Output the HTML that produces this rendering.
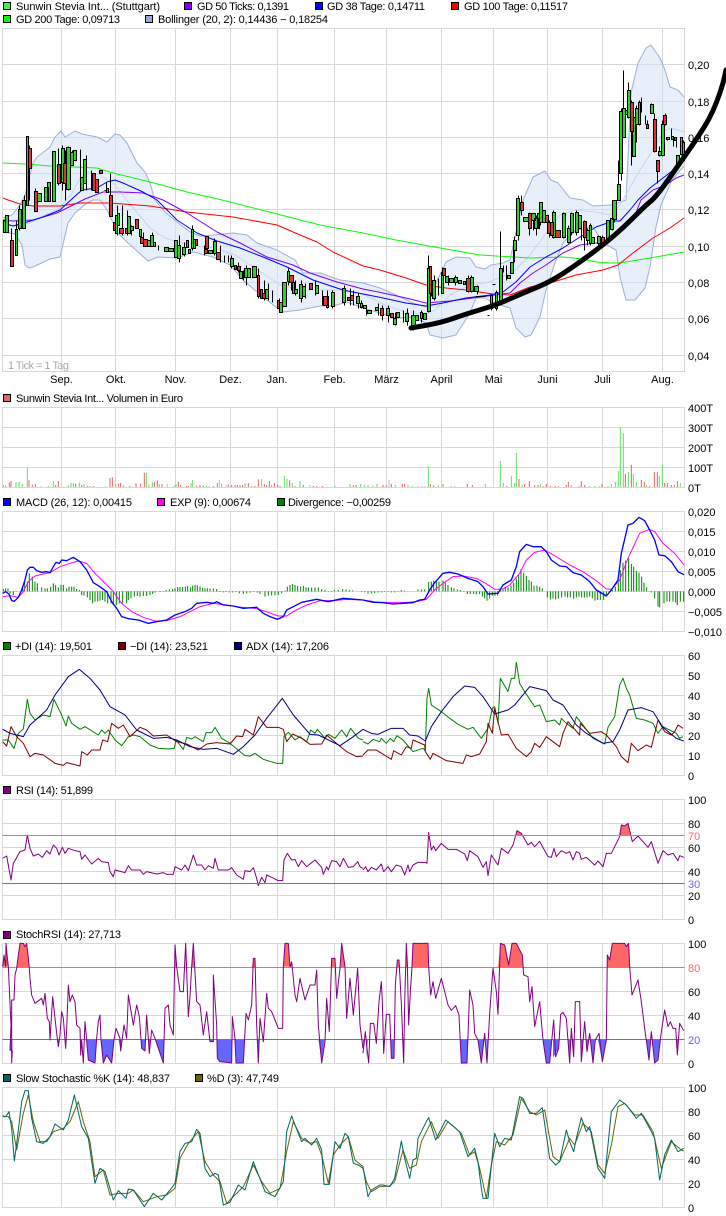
<!DOCTYPE html>
<html lang="de"><head><meta charset="utf-8"><title>Chart</title>
<style>
html,body{margin:0;padding:0;background:#fff}
svg{display:block}
text{font-family:"Liberation Sans",sans-serif;font-size:11px;fill:#000}
.l{fill:none;stroke-linejoin:round}
</style></head><body>
<svg xmlns="http://www.w3.org/2000/svg" width="726" height="1216" viewBox="0 0 726 1216">
<defs>
<clipPath id="ca"><rect x="3" y="943" width="682" height="24"/></clipPath>
<clipPath id="cb"><rect x="3" y="1039" width="682" height="25"/></clipPath>
</defs>
<rect width="726" height="1216" fill="#fff"/>

<!-- GRID -->
<g fill="none" stroke="#d8d8d8" shape-rendering="crispEdges">
<path d="M2.5 28.5H684.5V371.5H2.5ZM2.5 64.5H684.5M2.5 101.5H684.5M2.5 137.5H684.5M2.5 173.5H684.5M2.5 209.5H684.5M2.5 246.5H684.5M2.5 282.5H684.5M2.5 318.5H684.5M2.5 355.5H684.5M61.5 28V371M115.5 28V371M175.5 28V371M230.5 28V371M277.5 28V371M334.5 28V371M386.5 28V371M441.5 28V371M493.5 28V371M547.5 28V371M602.5 28V371M662.5 28V371"/>
<path d="M2.5 407.5H684.5V487.5H2.5ZM2.5 427.5H684.5M2.5 447.5H684.5M2.5 467.5H684.5M61.5 407V487M115.5 407V487M175.5 407V487M230.5 407V487M277.5 407V487M334.5 407V487M386.5 407V487M441.5 407V487M493.5 407V487M547.5 407V487M602.5 407V487M662.5 407V487"/>
<path d="M2.5 511.5H684.5V631.5H2.5ZM2.5 531.5H684.5M2.5 551.5H684.5M2.5 571.5H684.5M2.5 591.5H684.5M2.5 611.5H684.5M61.5 511V631M115.5 511V631M175.5 511V631M230.5 511V631M277.5 511V631M334.5 511V631M386.5 511V631M441.5 511V631M493.5 511V631M547.5 511V631M602.5 511V631M662.5 511V631"/>
<path d="M2.5 655.5H684.5V775.5H2.5ZM2.5 675.5H684.5M2.5 695.5H684.5M2.5 715.5H684.5M2.5 735.5H684.5M2.5 755.5H684.5M61.5 655V775M115.5 655V775M175.5 655V775M230.5 655V775M277.5 655V775M334.5 655V775M386.5 655V775M441.5 655V775M493.5 655V775M547.5 655V775M602.5 655V775M662.5 655V775"/>
<path d="M2.5 799.5H684.5V919.5H2.5ZM2.5 823.5H684.5M2.5 847.5H684.5M2.5 871.5H684.5M2.5 895.5H684.5M61.5 799V919M115.5 799V919M175.5 799V919M230.5 799V919M277.5 799V919M334.5 799V919M386.5 799V919M441.5 799V919M493.5 799V919M547.5 799V919M602.5 799V919M662.5 799V919"/>
<path d="M2.5 943.5H684.5V1063.5H2.5ZM2.5 991.5H684.5M2.5 1015.5H684.5M61.5 943V1063M115.5 943V1063M175.5 943V1063M230.5 943V1063M277.5 943V1063M334.5 943V1063M386.5 943V1063M441.5 943V1063M493.5 943V1063M547.5 943V1063M602.5 943V1063M662.5 943V1063"/>
<path d="M2.5 1087.5H684.5V1207.5H2.5ZM2.5 1111.5H684.5M2.5 1135.5H684.5M2.5 1159.5H684.5M2.5 1183.5H684.5M61.5 1087V1207M115.5 1087V1207M175.5 1087V1207M230.5 1087V1207M277.5 1087V1207M334.5 1087V1207M386.5 1087V1207M441.5 1087V1207M493.5 1087V1207M547.5 1087V1207M602.5 1087V1207M662.5 1087V1207"/>
</g>

<!-- BOLLINGER -->
<path fill="#d4e2f7" fill-opacity=".55" stroke="none" d="M3 218L12 215 20 205 25 195 33 163 37 157 50 147 55 137 61 131 65 137 75 131 82 134 97 137 107 142 115 134 120 135 127 143 137 163 145 172 150 183 155 200 165 212 177 222 190 232 200 236 213 235 233 233 247 235 257 243 277 250 295 260 303 273 320 273 340 280 363 283 380 288 396 295 413 303 426 307 436 283 446 262 456 257 470 258 476 267 485 269 491 265 503 263 510 260 523 200 533 177 545 171 551 180 558 183 570 198 583 200 593 206 611 205 626 200 631 93 638 63 646 48 651 45 660 58 665 70 670 87 678 90 684 97V166L672 180 661 205 656 227 650 267 645 288 635 300 626 300 620 277 616 250 603 243 593 227 576 230 563 243 555 263 546 290 540 317 531 335 525 337 516 328 510 308 493 303 485 298 476 298 470 313 456 335 443 338 430 335 426 323 413 317 396 318 380 313 363 308 347 302 333 306 320 306 300 310 283 312 277 308 257 292 243 280 230 265 213 257 193 252 177 258 158 257 148 261 128 243 118 233 107 210 100 200 93 200 87 203 75 213 68 223 60 257 50 259 33 267 29 268 25 265 22 245 15 234 3 232Z"/>
<path class="l" stroke="#9db0d8" d="M3 218L12 215 20 205 25 195 33 163 37 157 50 147 55 137 61 131 65 137 75 131 82 134 97 137 107 142 115 134 120 135 127 143 137 163 145 172 150 183 155 200 165 212 177 222 190 232 200 236 213 235 233 233 247 235 257 243 277 250 295 260 303 273 320 273 340 280 363 283 380 288 396 295 413 303 426 307 436 283 446 262 456 257 470 258 476 267 485 269 491 265 503 263 510 260 523 200 533 177 545 171 551 180 558 183 570 198 583 200 593 206 611 205 626 200 631 93 638 63 646 48 651 45 660 58 665 70 670 87 678 90 684 97"/>
<path class="l" stroke="#9db0d8" d="M3 232L15 234 22 245 25 265 29 268 33 267 50 259 60 257 68 223 75 213 87 203 93 200 100 200 107 210 118 233 128 243 148 261 158 257 177 258 193 252 213 257 230 265 243 280 257 292 277 308 283 312 300 310 320 306 333 306 347 302 363 308 380 313 396 318 413 317 426 323 430 335 443 338 456 335 470 313 476 298 485 298 493 303 510 308 516 328 525 337 531 335 540 317 546 290 555 263 563 243 576 230 593 227 603 243 616 250 620 277 626 300 635 300 645 288 650 267 656 227 661 205 672 180 684 166"/>
<path class="l" stroke="#c5d6f0" d="M3 225L15 226 30 223 45 215 60 208 72 193 80 178 88 172 100 175 115 185 125 198 135 210 150 228 165 238 180 243 195 246 215 248 235 255 250 265 270 278 280 285 300 290 320 290 345 290 365 295 385 305 405 312 425 315 435 310 450 295 470 285 485 283 500 278 515 270 530 255 545 235 560 215 575 210 595 212 610 215 620 205 640 170 653 150 663 132 670 128 678 130 684 132"/>

<!-- MOVING AVERAGES -->
<path class="l" stroke="#00ff00" d="M3 163L25 164 50 166 97 168 113 173 150 182 187 192 222 200 277 214 320 225 363 233 396 240 440 248 480 255 530 258 563 257 583 259 596 262 610 263 620 263 650 258 684 252"/>
<path class="l" stroke="#ff0000" d="M3 198L8 200 20 204 33 206 60 206 80 203 110 203 150 206 187 212 233 217 277 225 300 235 317 242 333 252 363 266 380 270 406 278 426 285 446 288 466 290 493 294 510 295 530 287 550 283 576 275 603 270 618 265 633 253 653 238 670 228 684 218"/>
<path class="l" stroke="#7f00ff" d="M3 220L13 221 33 220 57 213 73 205 85 199 103 192 120 192 143 193 163 200 187 213 217 232 240 243 267 257 293 265 310 273 337 282 363 289 383 293 406 298 426 303 450 301 473 298 510 293 520 283 533 273 546 265 563 253 580 245 596 243 610 240 623 230 633 220 641 200 653 190 666 185 676 178 684 175"/>
<path class="l" stroke="#0000ff" d="M3 223L13 226 27 222 43 217 60 210 73 198 82 190 97 188 107 182 115 180 123 183 143 192 157 200 177 220 197 233 217 241 240 248 263 257 287 267 313 280 343 290 363 294 383 298 406 303 426 306 443 303 466 298 490 295 503 292 516 282 530 267 546 257 563 248 580 237 596 227 613 221 620 221 630 210 638 200 650 188 663 178 676 168 684 161"/>

<!-- CANDLES -->
<g transform="translate(.5 .5)" shape-rendering="crispEdges">
<path fill="none" stroke="#000" d="M11 228V266M16 220V255M19 205V230M24 195V228M27 136V205M29 145V200M35 188V205M58 148V185M62 145V190M65 150V200M68 146V190M72 150V165M80 149V178M86 155V190M91 170V190M106 182V192M110 173V205M117 205V235M122 205V235M127 210V235M131 225V235M143 232V245M152 232V246M158 245V250M177 240V257M179 235V262M184 242V256M192 225V250M204 245V255M214 238V255M220 245V262M224 255V262M228 255V262M231 255V268M238 262V272M243 270V280M246 265V285M258 268V298M264 280V300M268 283V300M272 290V302M279 298V312M288 268V285M291 275V290M295 280V295M301 280V302M305 283V298M315 280V295M322 290V305M327 290V308M332 290V308M344 285V305M350 288V305M353 290V305M358 292V308M361 300V308M366 305V315M378 303V315M382 305V320M388 305V322M395 312V325M403 310V322M407 308V325M413 310V330M421 310V322M428 255V312M431 266V296M434 275V300M438 278V295M442 267V290M448 275V285M455 275V285M468 275V292M471 275V292M477 285V294M491 294V310M496 290V310M500 231V305M503 265V272M506 265V280M513 250V262M514 236V262M518 195V240M521 195V215M529 212V235M533 213V230M536 215V235M540 202V225M549 220V237M553 210V238M563 212V238M568 225V243M571 212V235M576 210V235M581 215V240M584 220V250M587 228V245M590 223V245M598 235V246M602 235V247M608 220V242M612 212V230M614 200V222M618 160V200M621 108V180M623 70V108M628 82V118M631 100V165M633 117V148M636 105V142M639 100V125M641 97V112M645 115V124M647 120V128M651 103V113M654 113V152M657 160V183M659 146V156M662 120V156M665 113V125M667 137V140M671 128V137M673 137V146M676 137V147M677 155V168M681 137V155M683 140V160M487 315H489M475 296H485M492 284H495M104 190H108"/>
<path fill="#33cc33" stroke="#000" d="M3 220h2v12h-2zM5 215h3v17h-3zM15 229h2v26h-2zM18 209h3v19h-3zM22 200h3v28h-3zM26 136h2v69h-2zM37 193h4v8h-4zM44 187h4v14h-4zM47 182h3v19h-3zM52 151h3v50h-3zM61 148h3v34h-3zM66 147h4v42h-4zM70 152h3v13h-3zM73 150h3v10h-3zM80 177h3v13h-3zM83 159h3v24h-3zM106 188h2v4h-2zM115 215h2v18h-2zM117 213h2v12h-2zM127 216h3v17h-3zM130 226h3v4h-3zM139 229h2v7h-2zM147 240h3v6h-3zM150 235h3v11h-3zM153 242h2v4h-2zM164 247h4v4h-4zM168 248h5v3h-5zM174 240h3v17h-3zM177 245h3v13h-3zM182 247h3v7h-3zM186 240h2v7h-2zM188 249h2v4h-2zM191 229h2v19h-2zM193 239h2v9h-2zM208 250h4v3h-4zM213 241h3v12h-3zM230 258h3v8h-3zM239 271h3v7h-3zM244 268h3v9h-3zM247 268h3v9h-3zM252 266h4v11h-4zM265 289h3v9h-3zM279 302h3v10h-3zM282 282h4v24h-4zM287 271h2v10h-2zM292 282h2v11h-2zM294 289h3v4h-3zM299 284h3v14h-3zM302 286h3v10h-3zM315 285h3v8h-3zM326 296h2v11h-2zM331 292h3v14h-3zM342 288h3v14h-3zM356 296h3v7h-3zM360 303h2v4h-2zM363 305h3v3h-3zM367 310h4v3h-4zM375 307h3v3h-3zM386 308h3v7h-3zM393 318h3v6h-3zM396 312h3v5h-3zM405 313h3v8h-3zM411 315h4v11h-4zM415 315h3v5h-3zM420 312h2v6h-2zM423 313h3v6h-3zM427 268h3v43h-3zM432 280h3v18h-3zM441 272h2v21h-2zM445 276h3v6h-3zM449 278h4v4h-4zM454 277h3v5h-3zM458 280h3v3h-3zM463 281h2v3h-2zM470 277h3v14h-3zM474 286h4v5h-4zM490 295h2v13h-2zM495 292h2v16h-2zM499 268h3v35h-3zM507 275h3v3h-3zM510 262h3v11h-3zM513 240h3v10h-3zM516 198h3v37h-3zM523 217h5v4h-5zM531 213h4v7h-4zM534 218h4v10h-4zM537 213h2v15h-2zM539 202h3v20h-3zM542 210h3v12h-3zM552 212h3v25h-3zM562 213h3v24h-3zM567 228h3v14h-3zM570 213h3v19h-3zM575 212h3v20h-3zM578 215h3v13h-3zM586 230h3v10h-3zM589 225h2v18h-2zM591 237h3v6h-3zM597 236h3v7h-3zM606 220h3v19h-3zM610 218h3v11h-3zM612 200h4v19h-4zM617 184h3v16h-3zM619 111h3v62h-3zM622 108h3v29h-3zM625 110h2v4h-2zM627 90h3v27h-3zM632 117h3v39h-3zM635 108h3v16h-3zM638 102h2v22h-2zM650 104h3v9h-3zM658 151h3v4h-3zM661 124h3v31h-3zM666 137h3v2h-3zM671 136h2v3h-2zM676 155h3v11h-3zM680 137h2v17h-2zM682 142h2v18h-2z"/>
<path fill="#dd3333" stroke="#000" d="M10 240h3v26h-3zM28 148h3v20h-3zM34 191h3v20h-3zM57 164h3v19h-3zM63 163h3v20h-3zM92 173h3v17h-3zM95 179h3v13h-3zM99 170h3v3h-3zM109 195h3v21h-3zM113 222h2v8h-2zM119 228h4v5h-4zM125 228h2v5h-2zM135 219h3v9h-3zM140 237h3v6h-3zM143 239h4v7h-4zM195 239h2v6h-2zM204 249h3v4h-3zM205 236h3v12h-3zM216 252h4v7h-4zM234 265h2v4h-2zM237 266h3v4h-3zM257 275h2v21h-2zM260 289h2v9h-2zM262 293h3v5h-3zM277 300h2v8h-2zM289 275h4v7h-4zM309 283h3v6h-3zM323 296h4v9h-4zM347 297h3v3h-3zM350 295h3v5h-3zM380 308h3v7h-3zM390 313h3v4h-3zM429 266h2v27h-2zM442 268h3v7h-3zM466 278h4v13h-4zM520 202h3v8h-3zM528 213h3v15h-3zM545 215h3v7h-3zM547 222h3v11h-3zM550 222h3v13h-3zM555 230h5v7h-5zM583 221h3v16h-3zM601 237h3v8h-3zM630 102h3v29h-3zM646 124h2v4h-2zM653 119h3v32h-3zM656 160h3v11h-3zM663 115h3v9h-3zM674 137h2v3h-2z"/>
</g>

<!-- VOLUME (zoom coordinates, left) -->
<g transform="translate(0 390) scale(.33333)" fill="none" stroke-width="3">
<path stroke="#66dd66" d="M10 291V285M17 291V285M48 291V276M57 291V276M67 291V282M82 291V232M145 291V288M160 291V273M205 291V285M213 291V279M220 291V279M238 291V277M252 291V282M347 291V281M370 291V285M439 291V249M447 291V284M457 291V277M478 291V282M523 291V287M528 291V282M573 291V279M578 291V270M620 291V287M628 291V288M665 291V280M678 291V287M735 291V279M755 291V288M785 291V267M815 291V285M853 291V258M861 291V267M877 291V279M900 291V273M930 291V285M1005 291V288M1050 291V282M1082 291V282"/>
<path stroke="#dd6666" d="M28 291V278M33 291V273M87 291V270M97 291V284M106 291V282M167 291V285M175 291V273M227 291V281M245 291V285M263 291V288M270 291V288M280 291V288M330 291V264M337 291V262M355 291V281M362 291V279M390 291V288M408 291V280M422 291V281M433 291V249M463 291V276M472 291V271M486 291V282M535 291V276M542 291V285M560 291V288M565 291V288M590 291V287M600 291V285M610 291V287M640 291V288M652 291V279M685 291V283M695 291V285M705 291V285M712 291V285M720 291V285M728 291V285M745 291V279M765 291V288M775 291V268M793 291V282M800 291V285M808 291V273M823 291V279M833 291V285M840 291V288M869 291V270M885 291V288M910 291V285M940 291V288M950 291V288M968 291V288M1060 291V285M1068 291V285"/>
<path stroke="#c0c0c0" d="M122 291V288M316 291V288M502 291V282M658 291V270M678 291V285"/>
</g>
<!-- VOLUME right -->
<g transform="translate(363 390) scale(.33333)" fill="none" stroke-width="3">
<path stroke="#66dd66" d="M5 291V285M15 291V285M42 291V282M97 291V285M135 291V285M148 291V288M196 291V228M226 291V286M367 291V282M412 291V213M421 291V279M445 291V258M455 291V279M460 291V189M478 291V285M532 291V282M625 291V285M680 291V288M695 291V288M708 291V288M735 291V288M745 291V282M757 291V276M766 291V243M772 291V111M781 291V129M796 291V246M811 291V252M820 291V276M850 291V285M860 291V288M889 291V258M898 291V225M952 291V279"/>
<path stroke="#dd6666" d="M60 291V285M70 291V286M85 291V282M118 291V282M125 291V282M202 291V282M212 291V286M240 291V282M313 291V282M328 291V285M432 291V288M468 291V267M485 291V282M499 291V273M515 291V285M525 291V285M540 291V288M550 291V282M562 291V288M577 291V288M586 291V288M610 291V285M616 291V276M648 291V288M655 291V273M665 291V285M717 291V282M787 291V252M805 291V225M835 291V270M844 291V276M874 291V246M883 291V246M905 291V279M913 291V279M925 291V285M934 291V285M943 291V273"/>
<path stroke="#c0c0c0" d="M30 291V286M78 291V270M165 291V288M178 291V288M186 291V288M265 291V288M275 291V288"/>
</g>

<!-- MACD left -->
<g transform="translate(0 390) scale(.33333)" fill="none" stroke-linejoin="round">
<path stroke="#008000" stroke-width="3" d="M10 604V597M17 604V595M24 604V595M30 604V610M40 604V615M48 604V605M68 604V590M74 604V575M82 604V575M88 604V550M97 604V560M105 604V575M112 604V580M125 604V592M135 604V595M142 604V595M152 604V590M160 604V580M167 604V585M175 604V592M183 604V585M190 604V585M200 604V595M207 604V590M215 604V590M222 604V590M230 604V597M238 604V600M245 604V615M252 604V617M262 604V622M270 604V630M278 604V640M285 604V635M293 604V635M300 604V632M308 604V630M315 604V635M323 604V640M333 604V640M340 604V645M350 604V645M358 604V640M368 604V640M380 604V640M385 604V630M393 604V625M403 604V620M412 604V618M420 604V620M430 604V618M440 604V618M450 604V615M458 604V612M465 604V608M480 604V606M490 604V603M498 604V600M508 604V598M518 604V597M525 604V595M533 604V591M540 604V591M548 604V591M556 604V590M563 604V588M572 604V592M578 604V587M585 604V585M592 604V586M600 604V590M608 604V594M615 604V595M622 604V595M630 604V596M640 604V596M650 604V597M660 604V606M670 604V607M678 604V606M688 604V607M698 604V607M708 604V606M718 604V610M730 604V612M740 604V610M750 604V608M760 604V606M772 604V608M780 604V612M795 604V620M805 604V617M815 604V616M825 604V616M835 604V615M845 604V610M855 604V602M862 604V590M870 604V585M878 604V582M885 604V585M893 604V588M902 604V590M910 604V588M918 604V592M925 604V593M935 604V593M945 604V592M955 604V592M965 604V597M975 604V600M985 604V603M995 604V606M1003 604V600M1015 604V600M1028 604V597M1038 604V598M1048 604V600M1058 604V601M1070 604V604M1085 604V606"/>
<path stroke="#ff00ff" stroke-width="3" d="M8 620L30 617 55 622 70 605 85 575 105 558 130 552 150 548 180 530 210 520 235 513 260 520 285 550 310 575 340 605 365 640 395 665 430 682 465 693 500 692 540 680 570 665 600 650 640 640 680 645 725 652 765 655 800 665 835 678 860 678 885 662 920 645 960 632 1000 632 1040 628 1089 630"/>
<path stroke="#0000ff" stroke-width="4" d="M8 610L17 605 27 612 35 632 43 634 55 622 65 600 75 570 82 540 90 532 100 532 110 542 125 547 140 545 150 548 160 530 168 517 178 520 185 510 200 512 220 502 240 515 260 540 280 578 300 590 320 605 335 635 350 655 365 680 385 686 415 690 445 700 470 695 500 690 525 675 555 665 575 655 590 640 620 637 640 640 650 635 670 645 700 648 730 655 770 652 790 670 810 680 832 688 850 680 860 660 880 650 905 637 950 628 985 635 1030 625 1089 630"/>
</g>
<!-- MACD right -->
<g transform="translate(363 390) scale(.33333)" fill="none" stroke-linejoin="round">
<path stroke="#008000" stroke-width="3" d="M5 604V607M15 604V611M25 604V611M35 604V609M45 604V608M55 604V607M65 604V606M75 604V606M85 604V607M95 604V607M105 604V603M115 604V600M125 604V602M135 604V605M145 604V604M155 604V604M165 604V598M175 604V598M185 604V598M197 604V576M205 604V575M212 604V572M220 604V573M228 604V575M240 604V572M247 604V578M255 604V585M265 604V592M273 604V595M283 604V598M292 604V600M302 604V603M313 604V612M322 604V612M332 604V612M340 604V613M350 604V612M358 604V620M365 604V625M372 604V632M380 604V625M388 604V617M396 604V617M404 604V617M413 604V600M420 604V598M427 604V590M435 604V592M444 604V587M452 604V578M460 604V565M467 604V555M474 604V537M482 604V548M490 604V558M498 604V570M505 604V575M513 604V587M522 604V587M530 604V590M538 604V595M553 604V622M562 604V628M570 604V625M578 604V628M586 604V626M596 604V622M606 604V620M614 604V622M622 604V622M632 604V626M640 604V622M648 604V620M656 604V622M664 604V623M672 604V622M680 604V620M688 604V625M696 604V632M704 604V630M712 604V630M722 604V630M730 604V615M738 604V606M748 604V600M757 604V590M766 604V578M772 604V540M780 604V518M788 604V512M797 604V505M805 604V522M812 604V530M820 604V543M828 604V548M836 604V560M843 604V578M851 604V592M860 604V605M865 604V607M875 604V625M885 604V650M890 604V652M903 604V640M912 604V635M920 604V635M930 604V635M938 604V638M943 604V645M952 604V635M962 604V635"/>
<path stroke="#ff00ff" stroke-width="3" d="M0 630L40 636 80 638 120 638 160 635 190 628 215 600 240 580 270 560 300 558 340 565 365 578 395 598 420 597 440 585 470 550 490 510 515 487 545 480 580 500 620 525 660 545 700 572 730 597 745 598 770 570 795 505 830 430 860 418 875 425 900 460 935 490 963 525"/>
<path stroke="#0000ff" stroke-width="4" d="M0 630L30 637 60 638 90 642 120 640 150 638 170 630 185 628 200 600 215 578 240 550 260 547 285 552 315 565 345 575 360 590 375 612 405 610 420 585 445 570 460 530 470 485 490 463 510 470 535 470 550 485 565 510 590 528 610 530 630 548 655 555 680 575 700 600 730 618 745 600 765 570 775 490 795 405 810 400 828 382 845 392 860 420 875 450 888 495 905 497 925 515 945 545 963 554"/>
</g>

<!-- DI + RSI left -->
<g transform="translate(0 640) scale(.33333)" fill="none" stroke-width="3" stroke-linejoin="round">
<path stroke="#008000" d="M8 300L25 300 42 325 55 280 70 267 82 178 90 220 105 240 130 225 150 230 162 178 185 225 198 258 205 228 215 250 240 268 255 260 295 285 305 270 315 280 325 270 345 300 365 317 385 290 400 285 420 290 450 315 475 325 505 327 523 325 528 300 550 328 560 292 575 297 585 290 610 305 618 278 635 278 645 262 665 295 690 310 735 347 750 348 765 340 790 358 830 370 848 370 852 290 865 277 885 300 900 290 920 305 932 270 945 280 952 268 975 295 985 283 1005 295 1025 270 1040 290 1052 265 1075 295 1089 300"/>
<path stroke="#800000" d="M8 305L20 318 33 260 50 290 70 310 90 350 105 340 130 345 165 370 190 376 200 368 240 378 245 335 262 345 275 330 300 330 308 300 323 305 335 250 355 265 370 255 390 290 420 262 440 270 460 288 500 285 530 305 560 312 595 330 620 312 650 308 690 312 710 288 728 290 735 268 760 285 775 230 800 262 835 262 850 268 860 305 878 282 905 295 930 313 965 312 980 285 1015 315 1040 335 1070 350 1089 348"/>
<path stroke="#000080" d="M8 268L30 280 70 290 90 255 110 237 140 210 165 165 205 110 238 88 270 115 300 150 330 200 375 225 410 270 460 295 500 292 530 300 570 320 610 328 650 325 700 343 730 320 765 285 800 235 847 175 880 225 930 283 955 285 1020 317 1060 290 1089 268"/>
<path stroke="#800080" d="M8 655L20 648 33 720 40 670 60 635 75 630 82 585 90 625 100 648 115 642 127 652 140 632 150 642 160 615 170 625 177 645 187 622 195 640 205 625 225 632 240 635 245 658 255 645 275 672 295 655 305 665 325 668 330 695 340 710 345 690 375 698 385 677 395 690 420 690 430 703 440 695 470 702 490 698 500 703 520 703 525 680 545 690 555 675 565 692 580 645 590 675 605 675 615 690 625 677 640 685 645 655 655 690 685 690 695 683 710 705 730 718 735 692 750 695 760 683 770 715 775 737 785 712 795 728 800 705 815 712 835 722 848 722 852 660 862 640 875 660 885 658 895 680 905 662 920 680 945 660 965 682 970 703 980 680 985 690 995 662 1010 665 1020 680 1030 655 1045 682 1060 680 1073 665 1080 680 1089 685"/>
</g>
<!-- DI + RSI right -->
<g transform="translate(363 640) scale(.33333)" fill="none" stroke-width="3" stroke-linejoin="round">
<path stroke="none" fill="#ff6666" d="M458 586L462 572 475 580 480 586ZM768 586L775 555 785 558 795 550 802 586Z"/>
<path stroke="#008000" d="M0 305L15 312 30 298 50 305 55 295 70 310 82 295 92 305 102 287 120 300 150 335 180 325 187 332 192 175 197 145 205 195 235 215 260 235 285 253 315 268 330 262 355 295 375 265 388 205 395 200 405 250 412 115 435 155 445 115 455 115 460 67 470 130 485 155 515 200 530 195 550 245 575 240 590 255 595 235 610 250 630 265 640 230 660 255 690 295 725 312 735 262 755 230 770 135 780 115 790 145 800 165 820 235 845 240 870 250 885 280 900 260 940 280 950 295 960 290"/>
<path stroke="#800000" d="M0 345L15 330 40 330 85 358 92 332 115 345 130 320 145 325 150 300 185 315 187 335 202 358 210 340 250 362 300 370 310 345 325 350 350 342 370 305 375 250 388 280 395 205 415 285 435 283 460 325 490 350 505 335 515 310 530 322 550 290 590 320 600 280 615 245 650 285 652 250 680 280 715 275 730 285 760 320 775 350 795 368 805 310 825 332 850 315 865 322 885 240 905 275 925 285 935 275 945 255 960 265"/>
<path stroke="#000080" d="M0 268L25 280 45 283 85 265 120 265 140 285 165 288 187 303 205 260 235 215 270 170 305 138 335 142 360 170 395 222 435 210 455 195 500 140 550 152 570 180 600 195 640 255 670 280 720 310 750 305 770 270 795 210 835 203 870 215 900 262 940 295 962 303"/>
<path stroke="#800080" d="M0 690L8 680 15 695 25 682 40 690 55 672 62 695 75 680 85 695 100 675 115 680 125 705 135 675 140 695 150 675 165 667 187 667 192 670 197 577 205 630 212 618 218 632 235 610 255 628 280 628 305 642 313 662 320 632 345 650 360 682 370 665 375 707 385 645 405 675 415 625 435 640 450 615 462 572 475 580 495 615 505 607 515 620 530 604 555 650 565 652 573 625 580 650 595 632 610 640 620 635 630 660 640 635 650 640 655 658 670 652 695 675 705 663 720 680 730 640 745 640 770 590 775 555 785 558 795 550 808 605 825 588 855 622 865 605 885 670 900 632 915 645 930 640 945 662 950 647 963 652"/>
</g>
<path d="M2.5 835.5H684.5M2.5 967.5H684.5" stroke="#ff6666" fill="none" shape-rendering="crispEdges"/>
<path d="M2.5 883.5H684.5M2.5 1039.5H684.5" stroke="#6666ff" fill="none" shape-rendering="crispEdges"/>

<!-- STOCH RSI fills -->
<g clip-path="url(#ca)">
<g transform="translate(0 925) scale(.33333)" fill="#ff6666"><path d="M8 125L12 90 17 125 18 55 22 98 25 125ZM50 130L55 90 60 55 70 55 75 65 80 55 85 100 88 130ZM525 130L525 60 530 125ZM557 130L557 55 560 130ZM575 125L580 55 585 130ZM755 130L760 100 765 100 768 130ZM850 125L855 55 865 55 870 125ZM870 130L875 110 878 130ZM992 130L995 100 1005 100 1007 130ZM1022 130L1025 55 1035 125Z"/></g>
<g transform="translate(363 925) scale(.33333)" fill="#ff6666"><path d="M100 130L103 105 108 105 112 130ZM128 130L130 55 133 115 135 130ZM146 130L150 55 195 55 197 130ZM405 130L412 55 425 60 437 120 447 55 460 55 470 75 478 90 482 130ZM732 130L733 90 740 105 748 55 785 55 790 65 797 55 800 130Z"/></g>
</g>
<g clip-path="url(#cb)">
<g transform="translate(0 925) scale(.33333)" fill="#6666ff"><path d="M30 340V375L37 378V340ZM170 340L175 365 180 340ZM240 340L242 390 245 340ZM258 340L265 405 285 414 290 340ZM303 340L310 414 320 390 335 414 342 340ZM355 340L362 378 365 340ZM421 340L425 370 435 378 438 340ZM446 340L448 385 453 340ZM465 340L475 370 490 414 492 340ZM628 340V350H640V340ZM650 340L652 400 660 410 695 414 696 340ZM703 340L708 414 730 414 733 340ZM772 340L775 414 778 340ZM788 340L790 350 795 340ZM955 340L965 414 973 350V340Z"/></g>
<g transform="translate(363 925) scale(.33333)" fill="#6666ff"><path d="M0 340V385L7 340ZM10 340V400L15 340ZM60 340L62 385 66 340ZM82 340L85 400 93 400 95 340ZM120 340L122 414 125 340ZM292 340L295 414 312 414 316 340ZM345 340L355 414 365 340ZM370 340V410L376 340ZM540 340L550 414 560 414 566 340ZM570 340V395H572L587 370 590 340ZM615 340L620 414 624 340ZM628 340L632 395 635 340ZM652 340L655 410 662 340ZM668 340L672 380 676 340ZM682 340L690 414 696 340ZM704 340V340L718 410 730 345V340ZM850 340L858 405 862 340ZM868 340L875 414 885 405 892 340ZM940 340L943 390 947 340Z"/></g>
</g>
<!-- STOCH RSI + STOCH left -->
<g transform="translate(0 925) scale(.33333)" fill="none" stroke-width="3" stroke-linejoin="round">
<path stroke="#800080" d="M8 125L12 90 17 125 18 55 22 98 25 125 33 300 30 375 37 378 35 414 35 225 42 225 45 150 50 130 55 90 60 55 70 55 75 65 80 55 85 100 88 130 90 160 95 210 105 235 125 220 130 240 135 205 142 280 148 290 150 345 158 215 165 280 170 325 175 365 180 330 185 260 190 280 197 370 200 315 205 180 210 230 217 210 225 230 230 300 240 310 242 390 245 345 250 414 255 290 260 345 265 405 285 414 290 340 295 290 300 270 303 345 310 414 320 390 335 414 342 345 348 310 360 340 362 378 372 300 380 340 385 210 390 240 400 300 410 240 418 275 425 370 435 378 440 270 448 385 455 315 465 340 475 370 490 414 495 250 505 240 510 300 520 330 525 60 530 125 540 200 550 200 557 55 565 275 570 215 575 125 580 55 590 230 600 240 610 330 620 260 630 350 640 350 640 150 650 300 652 400 660 410 695 414 697 275 705 340 708 414 730 414 738 265 745 285 755 240 760 100 765 100 770 300 775 414 780 280 790 350 800 205 805 250 815 260 835 310 848 310 850 125 855 55 865 55 870 125 875 110 885 210 890 230 900 160 915 225 930 180 945 180 950 135 955 300 965 414 975 350 980 220 988 320 995 100 1005 100 1010 220 1020 130 1025 55 1035 125 1040 280 1050 160 1060 270 1073 130 1080 300 1089 370"/>
<path stroke="#666600" d="M8 575L25 575 35 590 50 675 70 565 85 510 100 590 120 650 140 650 160 620 190 610 210 590 235 530 250 590 270 650 285 755 310 735 330 810 355 805 385 805 400 795 430 830 470 815 500 810 525 790 540 700 565 655 595 620 615 710 640 750 660 770 680 835 700 815 730 785 760 720 785 770 810 805 840 790 860 680 880 590 905 640 930 655 950 650 965 690 985 775 1000 690 1020 660 1045 635 1065 705 1089 725"/>
<path stroke="#006666" d="M8 572L17 575 27 560 35 610 43 708 52 640 65 530 75 497 85 497 95 580 110 650 130 655 150 635 165 597 190 615 205 585 223 510 230 540 245 605 265 640 285 775 300 730 315 740 340 825 355 797 378 820 385 792 400 795 433 845 460 805 485 825 510 795 525 775 540 680 555 655 575 650 590 613 600 625 615 730 630 755 645 745 655 750 670 840 690 832 715 780 735 795 760 710 795 800 825 815 850 770 860 620 875 573 885 600 905 650 915 640 935 660 950 640 965 675 972 778 988 778 1005 650 1020 670 1035 625 1045 635 1060 715 1075 720 1089 730"/>
</g>
<!-- right -->
<g transform="translate(363 925) scale(.33333)" fill="none" stroke-width="3" stroke-linejoin="round">
<path stroke="#800080" d="M0 385L7 320 12 370 17 414 22 295 32 295 40 355 48 230 55 170 58 230 62 385 70 268 80 268 85 400 93 400 97 180 103 105 108 105 115 235 122 414 125 235 130 55 133 115 137 300 142 200 147 125 150 55 195 55 197 125 203 210 210 170 218 220 235 160 245 200 255 240 265 256 278 242 288 270 295 414 312 414 320 195 330 240 335 325 345 345 355 414 365 325 372 414 380 265 390 130 400 200 405 268 412 55 425 60 437 120 447 55 460 55 470 75 478 90 482 150 495 155 500 230 507 185 515 305 530 230 540 345 550 414 560 414 572 285 578 395 587 370 593 268 600 262 610 280 620 414 625 310 632 395 637 230 650 230 655 410 665 290 672 380 680 325 690 414 697 345 708 325 718 410 730 345 733 90 740 105 748 55 785 55 790 65 797 55 800 125 807 210 825 165 835 230 845 310 858 405 865 320 875 414 885 405 895 320 905 255 915 305 922 290 930 310 938 310 943 390 950 295 962 317"/>
<path stroke="#666600" d="M0 730L10 770 25 800 50 785 80 783 95 770 120 675 140 730 160 720 175 650 205 590 225 640 255 590 295 625 320 690 335 680 350 730 370 820 385 720 400 650 425 660 450 630 475 520 500 560 520 570 545 555 570 695 590 710 620 640 635 660 660 595 685 620 705 720 725 745 745 660 765 545 785 535 815 570 840 570 870 620 895 730 925 650 955 675 962 678"/>
<path stroke="#006666" d="M0 725L15 815 25 795 50 780 60 780 80 785 95 760 115 648 125 700 140 760 150 705 160 700 165 640 190 590 197 578 218 645 248 585 290 620 315 695 335 670 345 710 355 790 360 820 375 820 395 625 410 665 425 640 445 645 470 515 480 520 500 565 520 565 538 548 560 700 578 720 590 710 610 615 620 650 632 680 640 640 655 578 670 620 680 605 705 730 725 760 745 560 770 525 790 540 820 580 835 565 860 610 875 640 890 765 905 690 925 645 945 680 962 670"/>
</g>

<!-- LEGEND BOXES -->
<g stroke="#000" shape-rendering="crispEdges">
<rect x="3.5" y="2.5" width="7" height="7" fill="#44ee44"/>
<rect x="184.5" y="2.5" width="7" height="7" fill="#7f00ff"/>
<rect x="315.5" y="2.5" width="7" height="7" fill="#0000ff"/>
<rect x="451.5" y="2.5" width="7" height="7" fill="#ff0000"/>
<rect x="3.5" y="15.5" width="7" height="7" fill="#00ff00"/>
<rect x="145.5" y="15.5" width="7" height="7" fill="#99aad4"/>
<rect x="3.5" y="394.5" width="7" height="7" fill="#dd6666"/>
<rect x="3.5" y="498.5" width="7" height="7" fill="#0000ff"/>
<rect x="157.5" y="498.5" width="7" height="7" fill="#ff00ff"/>
<rect x="277.5" y="498.5" width="7" height="7" fill="#008000"/>
<rect x="3.5" y="642.5" width="7" height="7" fill="#008000"/>
<rect x="118.5" y="642.5" width="7" height="7" fill="#800000"/>
<rect x="234.5" y="642.5" width="7" height="7" fill="#000080"/>
<rect x="3.5" y="786.5" width="7" height="7" fill="#800080"/>
<rect x="3.5" y="931.5" width="7" height="7" fill="#800080"/>
<rect x="3.5" y="1074.5" width="7" height="7" fill="#006666"/>
<rect x="195.5" y="1074.5" width="7" height="7" fill="#666600"/>
</g>

<!-- LEGEND TEXT -->
<g lengthAdjust="spacing">
<text x="16" y="10" textLength="144">Sunwin Stevia Int... (Stuttgart)</text>
<text x="197" y="10" textLength="92">GD 50 Ticks: 0,1391</text>
<text x="327" y="10" textLength="98">GD 38 Tage: 0,14711</text>
<text x="464" y="10" textLength="104">GD 100 Tage: 0,11517</text>
<text x="16" y="23" textLength="104">GD 200 Tage: 0,09713</text>
<text x="158" y="23" textLength="170">Bollinger (20, 2): 0,14436 − 0,18254</text>
<text x="16" y="402" textLength="167">Sunwin Stevia Int... Volumen in Euro</text>
<text x="16" y="506" textLength="116">MACD (26, 12): 0,00415</text>
<text x="170" y="506" textLength="81">EXP (9): 0,00674</text>
<text x="288" y="506" textLength="103">Divergence: −0,00259</text>
<text x="15" y="650" textLength="77">+DI (14): 19,501</text>
<text x="130" y="650" textLength="78">−DI (14): 23,521</text>
<text x="246" y="650" textLength="83">ADX (14): 17,206</text>
<text x="16" y="794" textLength="77">RSI (14): 51,899</text>
<text x="16" y="938" textLength="105">StochRSI (14): 27,713</text>
<text x="16" y="1082" textLength="154">Slow Stochastic %K (14): 48,837</text>
<text x="207" y="1082" textLength="72">%D (3): 47,749</text>
</g>
<text x="8" y="369" textLength="61" style="fill:#aaa">1 Tick = 1 Tag</text>

<!-- X LABELS -->
<g text-anchor="middle">
<text x="61.5" y="383">Sep.</text><text x="116" y="383">Okt.</text><text x="175.5" y="383">Nov.</text><text x="230.5" y="383">Dez.</text><text x="277" y="383">Jan.</text><text x="334.5" y="383">Feb.</text><text x="386.5" y="383">März</text><text x="441.5" y="383">April</text><text x="493.5" y="383">Mai</text><text x="547.5" y="383">Juni</text><text x="602.5" y="383">Juli</text><text x="662.5" y="383">Aug.</text>
</g>

<!-- Y LABELS -->
<g>
<text x="688" y="69">0,20</text><text x="688" y="106">0,18</text><text x="688" y="142">0,16</text><text x="688" y="178">0,14</text><text x="688" y="214">0,12</text><text x="688" y="251">0,10</text><text x="688" y="287">0,08</text><text x="688" y="323">0,06</text><text x="688" y="360">0,04</text>
<text x="688" y="412">400T</text><text x="688" y="432">300T</text><text x="688" y="452">200T</text><text x="688" y="472">100T</text><text x="688" y="492">0T</text>
<text x="688" y="516">0,020</text><text x="688" y="536">0,015</text><text x="688" y="556">0,010</text><text x="688" y="576">0,005</text><text x="688" y="596">0,000</text><text x="688" y="616">−0,005</text><text x="688" y="636">−0,010</text>
<text x="688" y="660">60</text><text x="688" y="680">50</text><text x="688" y="700">40</text><text x="688" y="720">30</text><text x="688" y="740">20</text><text x="688" y="760">10</text><text x="688" y="780">0</text>
<text x="688" y="804">100</text><text x="688" y="828">80</text><text x="688" y="840" style="fill:#ff6666">70</text><text x="688" y="852">60</text><text x="688" y="876">40</text><text x="688" y="888" style="fill:#6666ff">30</text><text x="688" y="900">20</text><text x="688" y="924">0</text>
<text x="688" y="948">100</text><text x="688" y="972" style="fill:#ff6666">80</text><text x="688" y="996">60</text><text x="688" y="1020">40</text><text x="688" y="1044" style="fill:#6666ff">20</text><text x="688" y="1068">0</text>
<text x="688" y="1092">100</text><text x="688" y="1116">80</text><text x="688" y="1140">60</text><text x="688" y="1164">40</text><text x="688" y="1188">20</text><text x="688" y="1212">0</text>
</g>

<!-- BLACK TREND CURVE -->
<path fill="none" stroke="#000" stroke-width="5" stroke-linecap="round" stroke-linejoin="round" d="M411 328L425 325.5Q440 323 453 318.5Q466 314 481 309.5Q496 305 509.5 299Q523 293 536.5 287.5Q550 282 563 273.5Q576 265 589.5 255Q603 245 613 236.5Q623 228 634.5 216.5Q646 205 651 201Q656 197 668 180Q680 163 688 151.5Q696 140 704.5 126.5Q713 113 719.5 94Q724 81 726 70"/>
</svg>
</body></html>
